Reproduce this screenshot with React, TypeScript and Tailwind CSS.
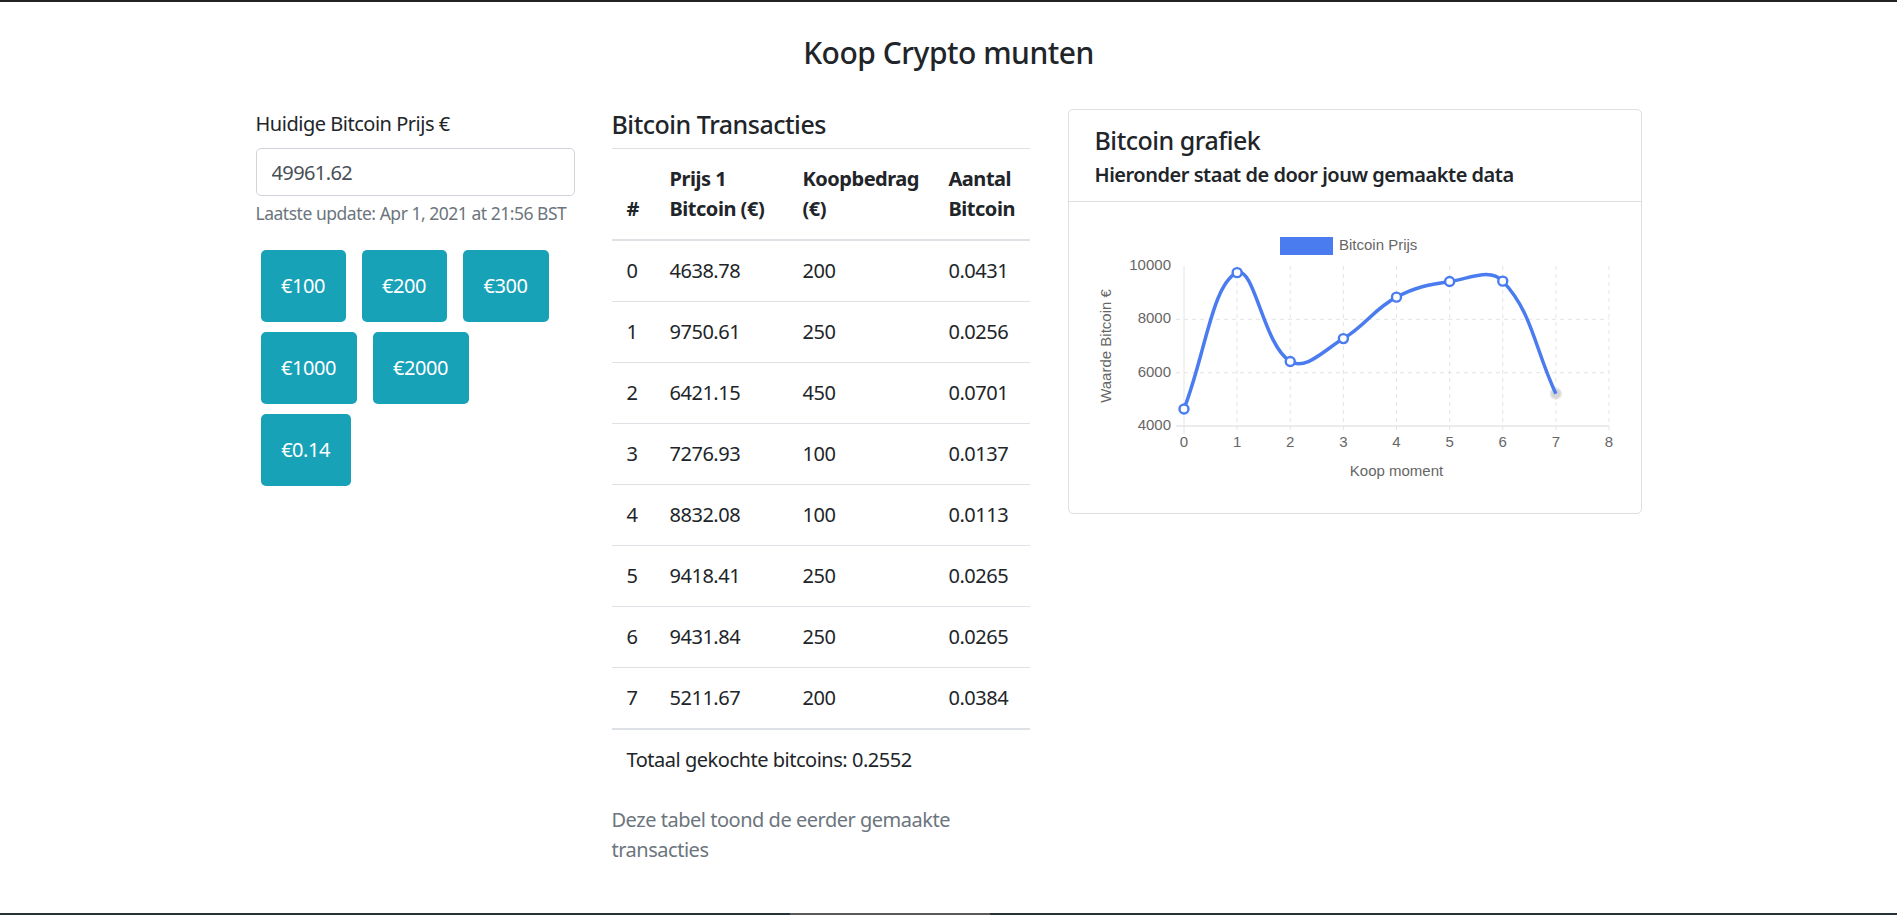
import React from "react";

const rows: [number, string, number, string][] = [
  [0, "4638.78", 200, "0.0431"],
  [1, "9750.61", 250, "0.0256"],
  [2, "6421.15", 450, "0.0701"],
  [3, "7276.93", 100, "0.0137"],
  [4, "8832.08", 100, "0.0113"],
  [5, "9418.41", 250, "0.0265"],
  [6, "9431.84", 250, "0.0265"],
  [7, "5211.67", 200, "0.0384"],
];

const vals = [4638.78, 9750.61, 6421.15, 7276.93, 8832.08, 9418.41, 9431.84, 5211.67];

function Chart() {
  const xs = (i: number) => 115 + i * 53.125;
  const ys = (v: number) => 224 - ((v - 4000) / 6000) * 160;
  const pts = vals.map((v, i) => ({ x: xs(i), y: ys(v) }));
  const t = 0.4;
  const cps = pts.map((p, i) => {
    const p0 = pts[i - 1] ?? p;
    const p2 = pts[i + 1] ?? p;
    const d01 = Math.hypot(p.x - p0.x, p.y - p0.y);
    const d12 = Math.hypot(p2.x - p.x, p2.y - p.y);
    let s01 = d01 / (d01 + d12);
    let s12 = d12 / (d01 + d12);
    if (isNaN(s01)) s01 = 0;
    if (isNaN(s12)) s12 = 0;
    const fa = t * s01;
    const fb = t * s12;
    const cap = (y: number) => Math.max(64, Math.min(224, y));
    return {
      prev: { x: p.x - fa * (p2.x - p0.x), y: cap(p.y - fa * (p2.y - p0.y)) },
      next: { x: p.x + fb * (p2.x - p0.x), y: cap(p.y + fb * (p2.y - p0.y)) },
    };
  });
  let d = `M${pts[0].x},${pts[0].y}`;
  for (let i = 1; i < pts.length; i++) {
    d += ` C${cps[i - 1].next.x},${cps[i - 1].next.y} ${cps[i].prev.x},${cps[i].prev.y} ${pts[i].x},${pts[i].y}`;
  }
  const blue = "#4a7cf0";
  const grid = "#e4e4e4";
  const font = "'Liberation Sans', Arial, sans-serif";
  const yTicks = [10000, 8000, 6000, 4000];
  return (
    <svg width="572" height="311" viewBox="0 0 572 311" className="block tracking-normal">
      {Array.from({ length: 9 }).map((_, i) => (
        <line
          key={"v" + i}
          x1={xs(i)}
          x2={xs(i)}
          y1={64}
          y2={232}
          stroke={grid}
          strokeWidth={1}
          strokeDasharray={i === 0 ? undefined : "4 4"}
        />
      ))}
      {[8000, 6000].map((v) => (
        <line
          key={"h" + v}
          x1={107}
          x2={540}
          y1={ys(v)}
          y2={ys(v)}
          stroke={grid}
          strokeWidth={1}
          strokeDasharray="4 4"
        />
      ))}
      <line x1={107} x2={540} y1={224} y2={224} stroke={grid} strokeWidth={1.6} />
      <rect x={211} y={35} width={53} height={18} fill={blue} />
      <text x={270} y={44} fontSize="15" fill="#666" dominantBaseline="middle" fontFamily={font}>
        Bitcoin Prijs
      </text>
      {yTicks.map((v) => (
        <text
          key={"yl" + v}
          x={102}
          y={ys(v)}
          fontSize="15"
          fill="#666"
          textAnchor="end"
          dominantBaseline="middle"
          fontFamily={font}
        >
          {v}
        </text>
      ))}
      {Array.from({ length: 9 }).map((_, i) => (
        <text
          key={"xl" + i}
          x={xs(i)}
          y={241}
          fontSize="15"
          fill="#666"
          textAnchor="middle"
          dominantBaseline="middle"
          fontFamily={font}
        >
          {i}
        </text>
      ))}
      <text x={327.5} y={270} fontSize="15" fill="#666" textAnchor="middle" dominantBaseline="middle" fontFamily={font}>
        Koop moment
      </text>
      <text
        x={0}
        y={0}
        transform="translate(38,144) rotate(-90)"
        fontSize="15"
        fill="#666"
        textAnchor="middle"
        dominantBaseline="middle"
        fontFamily={font}
      >
        Waarde Bitcoin €
      </text>
      <circle cx={pts[7].x} cy={pts[7].y} r={5.5} fill="#d6d6d6" stroke="#e8e8e8" strokeWidth={1.5} />
      <path d={d} fill="none" stroke={blue} strokeWidth={3.5} strokeLinejoin="round" />
      {pts.slice(0, 7).map((p, i) => (
        <circle key={"p" + i} cx={p.x} cy={p.y} r={4.5} fill="#fff" stroke={blue} strokeWidth={2.4} />
      ))}
    </svg>
  );
}

function Btn({ label, w }: { label: string; w: string }) {
  return (
    <button
      className={`${w} h-[72px] rounded-[5px] bg-[#17a2b8] text-white text-[20px] leading-[30px] flex items-center justify-center`}
    >
      {label}
    </button>
  );
}

export default function App() {
  return (
    <div
      className="min-h-[915px] flex flex-col bg-white text-[#212529] tracking-[-0.03em]"
      style={{ fontFamily: "'Noto Sans', 'Open Sans', sans-serif" }}
    >
      <div className="h-[2px] bg-[#222222]" />
      <h1 className="mt-[33px] text-center text-[30px] leading-[36px] font-medium">Koop Crypto munten</h1>

      <div className="mx-auto w-[1386px] flex items-start mt-[38px]">
        <div className="w-[319px] shrink-0">
          <div className="text-[20px] leading-[30px]">Huidige Bitcoin Prijs €</div>
          <input
            readOnly
            value="49961.62"
            className="mt-[9px] w-full h-[48px] border border-[#ced4da] rounded-[5px] px-[15px] text-[20px] text-[#495057] outline-none tracking-[-0.03em]"
          />
          <div className="mt-[4px] text-[17.5px] leading-[26px] text-[#6c757d] whitespace-nowrap">
            Laatste update: Apr 1, 2021 at 21:56 BST
          </div>
          <div className="mt-[24px] ml-[5px] flex flex-col gap-[10px]">
            <div className="flex gap-[16px]">
              <Btn label="€100" w="w-[85px]" />
              <Btn label="€200" w="w-[85px]" />
              <Btn label="€300" w="w-[86px]" />
            </div>
            <div className="flex gap-[16px]">
              <Btn label="€1000" w="w-[96px]" />
              <Btn label="€2000" w="w-[96px]" />
            </div>
            <div className="flex gap-[16px]">
              <Btn label="€0.14" w="w-[90px]" />
            </div>
          </div>
        </div>

        <div className="w-[418px] shrink-0 ml-[37px]">
          <h2 className="text-[25px] leading-[30px] font-medium">Bitcoin Transacties</h2>
          <table className="mt-[9px] w-full table-fixed border-collapse text-[20px] leading-[30px]">
            <colgroup>
              <col className="w-[43px]" />
              <col className="w-[133px]" />
              <col className="w-[146px]" />
              <col className="w-[96px]" />
            </colgroup>
            <thead>
              <tr>
                {["#", "Prijs 1 Bitcoin (€)", "Koopbedrag (€)", "Aantal Bitcoin"].map((h) => (
                  <th
                    key={h}
                    className="border-t border-b-2 border-[#dee2e6] p-[15px] pr-0 text-left align-bottom font-bold"
                  >
                    {h}
                  </th>
                ))}
              </tr>
            </thead>
            <tbody>
              {rows.map((r) => (
                <tr key={r[0]}>
                  <td className="border-t border-[#dee2e6] p-[15px] pr-0">{r[0]}</td>
                  <td className="border-t border-[#dee2e6] p-[15px] pr-0">{r[1]}</td>
                  <td className="border-t border-[#dee2e6] p-[15px] pr-0">{r[2]}</td>
                  <td className="border-t border-[#dee2e6] p-[15px] pr-0">{r[3]}</td>
                </tr>
              ))}
              <tr>
                <td colSpan={4} className="border-t-2 border-[#dee2e6] p-[15px]">
                  Totaal gekochte bitcoins: 0.2552
                </td>
              </tr>
            </tbody>
            <caption className="caption-bottom text-left pt-[15px] text-[#6c757d] leading-[30px]">
              Deze tabel toond de eerder gemaakte transacties
            </caption>
          </table>
        </div>

        <div className="w-[574px] shrink-0 ml-[38px] border border-[#dfdfdf] rounded-[5px]">
          <div className="px-[26px] pt-[15px] pb-[14px] border-b border-[#dfdfdf]">
            <h3 className="text-[25px] leading-[30px] font-medium mb-[8px]">Bitcoin grafiek</h3>
            <h4 className="text-[20px] leading-[24px] font-semibold">Hieronder staat de door jouw gemaakte data</h4>
          </div>
          <Chart />
        </div>
      </div>

      <div className="mt-auto h-[2px] flex">
        <div className="w-[790px] bg-[#263238]" />
        <div className="w-[200px] bg-[#5a5a5a]" />
        <div className="flex-1 bg-[#263238]" />
      </div>
    </div>
  );
}
